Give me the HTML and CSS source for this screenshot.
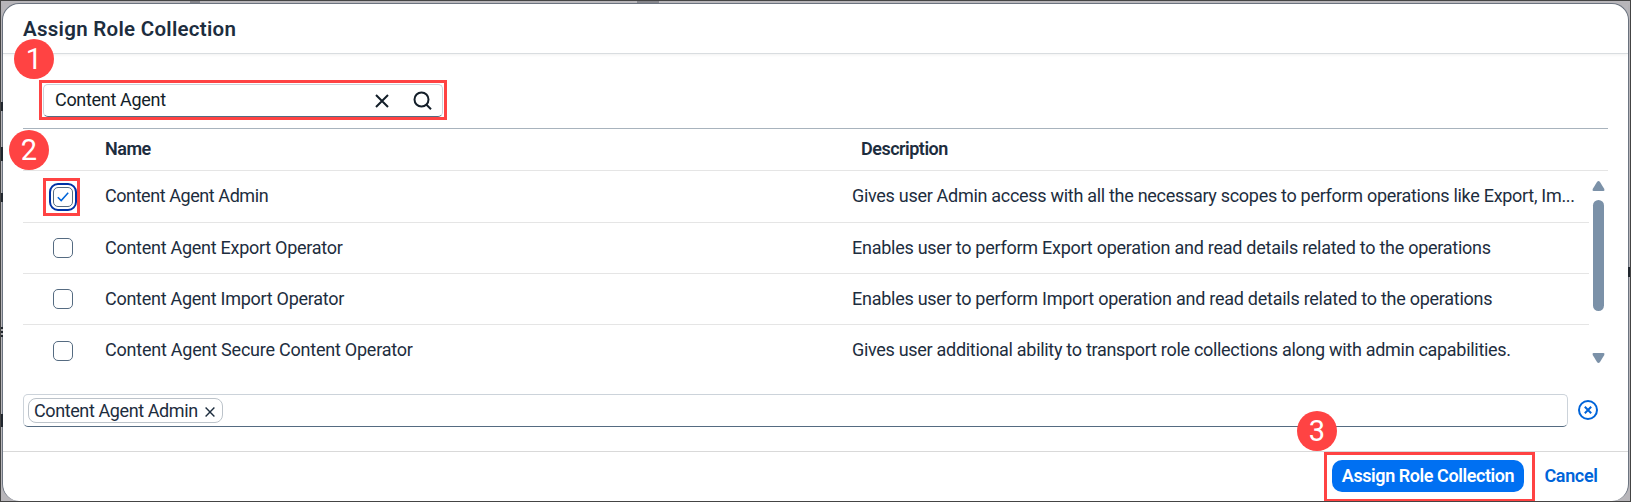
FILE: index.html
```html
<!DOCTYPE html>
<html lang="en">
<head>
<meta charset="utf-8">
<title>Assign Role Collection</title>
<link rel="stylesheet" href="styles.css">
</head>
<body>
<div class="frame">
  <span class="backdrop-tab tab-a"></span><span class="backdrop-tab tab-b"></span>
  <section class="dialog">
    <header class="dialog-header"><h1 class="title">Assign Role Collection</h1></header>
    <main class="content">
      <div class="search">
        <span class="search-text">Content Agent</span>
        <svg class="icon-clear" width="14" height="14" viewBox="0 0 14 14"><path d="M1 1l12 12M13 1L1 13"/></svg>
        <svg class="icon-search" width="20" height="20" viewBox="0 0 20 20"><circle cx="9.500" cy="8.500" r="7"/><path d="M14.500 13.800l4.500 4.500"/></svg>
      </div>
      <div class="table">
        <div class="row head"><b class="name">Name</b><b class="desc">Description</b></div>
        <div class="scroller">
          <div class="rows">
            <div class="row"><span class="check focused"><svg width="12" height="10" viewBox="0 0 12 10"><path d="M.8 5.200L4.200 8.600 11.200 .8"/></svg></span><span class="name n1">Content Agent Admin</span><span class="desc d1">Gives user Admin access with all the necessary scopes to perform operations like Export, Im...</span></div>
            <div class="row"><span class="check"></span><span class="name">Content Agent Export Operator</span><span class="desc">Enables user to perform Export operation and read details related to the operations</span></div>
            <div class="row"><span class="check"></span><span class="name">Content Agent Import Operator</span><span class="desc">Enables user to perform Import operation and read details related to the operations</span></div>
            <div class="row"><span class="check"></span><span class="name n4">Content Agent Secure Content Operator</span><span class="desc d4">Gives user additional ability to transport role collections along with admin capabilities.</span></div>
          </div>
          <div class="scrollbar">
            <svg width="13" height="10" viewBox="0 0 13 10"><path d="M6.500 0Q7.300 0 8 1L12.300 8Q13 10 11.500 10H1.500Q0 10 .7 8L5 1Q5.700 0 6.500 0z"/></svg>
            <span class="thumb"></span>
            <svg class="down" width="13" height="10" viewBox="0 0 13 10"><path d="M6.500 10Q7.300 10 8 9L12.300 2Q13 0 11.500 0H1.500Q0 0 .7 2L5 9Q5.700 10 6.500 10z"/></svg>
          </div>
        </div>
      </div>
      <div class="selection">
        <div class="token-input"><span class="token"><span class="token-text">Content Agent Admin</span><svg width="10" height="10" viewBox="0 0 10 10"><path d="M.6 .6l8.800 8.800M9.400 .6L.6 9.400"/></svg></span></div>
        <svg class="icon-remove" width="20" height="20" viewBox="0 0 20 20"><circle cx="10" cy="10" r="9"/><path d="M6.800 6.800l6.400 6.400M13.200 6.800l-6.400 6.400"/></svg>
      </div>
    </main>
    <footer class="dialog-footer">
      <button class="primary">Assign Role Collection</button>
      <button class="cancel">Cancel</button>
    </footer>
  </section>
  <span class="backdrop-mark mark-a"></span><span class="backdrop-mark mark-b"></span><span class="backdrop-mark mark-c"></span><span class="backdrop-mark mark-d"></span><span class="backdrop-mark mark-e"></span><span class="backdrop-mark mark-f"></span>
  <span class="mark-box box-1"></span><span class="mark-box box-2"></span><span class="mark-box box-3"></span>
  <span class="badge badge-1">1</span><span class="badge badge-2">2</span><span class="badge badge-3">3</span>
</div>
</body>
</html>
```
FILE: styles.css
```css
* { box-sizing: border-box; }
body { margin: 0; font-family: Roboto, "Liberation Sans", sans-serif; font-size: 18px; color: #1d2d3e; }
.frame { position: relative; width: 1631px; height: 502px; overflow: hidden; background: #b8b6ba; border: 1px solid #444; padding: 2px 1px 0 1px; }
.dialog { height: 498px; display: flex; flex-direction: column; background: #fff; border: 1px solid #6c7480; border-bottom: 0; border-radius: 17px; }
.frame span, .dialog button { white-space: nowrap; }
.dialog-header { height: 50px; flex: none; padding: 0 20px; border-bottom: 1px solid #d9dde0; box-shadow: 0 1px 3px #0000000f; display: flex; align-items: center; }
.title { margin: 0; font-size: 20.5px; line-height: 24px; font-weight: 600; letter-spacing: .28px; }
.content { flex: 1; min-height: 0; padding: 30px 20px 0; }
.search { width: 400px; height: 33px; margin-left: 20px; padding: 0 10px 0 11px; display: flex; align-items: center; border: 1px solid #ccd3da; border-bottom: 1px solid #556b81; border-radius: 5px; color: #131e29; }
.search-text { flex: 1; letter-spacing: -.32px; padding-bottom: 2px; }
svg { flex: none; fill: none; stroke: currentColor; stroke-width: 2; }
.icon-clear { margin-right: 23px; }
.table { margin-top: 11px; border-top: 1px solid #a8b3bd; }
.row { display: flex; align-items: center; height: 51px; border-bottom: 1px solid #e5e5e5; }
.row.head { height: 42px; padding-left: 82px; }
.row.head b { font-weight: 600; letter-spacing: -.5px; }
.name { width: 747px; flex: none; letter-spacing: -.27px; padding-bottom: 2px; }
.desc { letter-spacing: -.26px; padding-bottom: 2px; }
.n1 { letter-spacing: -.43px; }
.n4 { letter-spacing: -.23px; }
.d1 { letter-spacing: -.295px; }
.d4 { letter-spacing: -.3px; }
.row.head .desc { padding-left: 9px; }
.scroller { display: flex; height: 205px; }
.rows { width: 1566px; }
.rows .row:first-child { height: 52px; }
.rows .row:last-child { border-bottom: 0; }
.check { width: 20px; height: 20px; margin: 0 32px 0 30px; flex: none; display: flex; align-items: center; justify-content: center; border: 1px solid #556b81; border-radius: 5px; color: #0064d9; }
.check svg { stroke-width: 1.5; }
.focused { outline: 2px solid #0032a5; outline-offset: 2px; }
.scrollbar { width: 19px; padding: 10px 0 13px 3px; display: flex; flex-direction: column; color: #7b91a8; }
.scrollbar svg { fill: currentColor; stroke: none; }
.thumb { width: 11px; height: 111px; margin: 9px 0 0 1px; border-radius: 6px; background: #7b91a8; }
.down { margin-top: auto; }
.selection { display: flex; align-items: center; margin-top: 18px; }
.token-input { width: 1545px; height: 33px; padding: 3px 4px; border: 1px solid #ccd3da; border-bottom: 1px solid #556b81; border-radius: 5px; }
.token { display: flex; align-items: center; width: 195px; height: 25px; padding: 0 7px 0 5px; justify-content: space-between; border: 1px solid #bcc3ca; border-radius: 8px; }
.token-text { letter-spacing: -.4px; }
.token svg { stroke-width: 1.4; margin-top: 3px; }
.icon-remove { margin: 0 0 2px 10px; color: #0064d9; }
.dialog-footer { height: 50px; flex: none; border-top: 1px solid #d9d9d9; display: flex; align-items: flex-start; justify-content: flex-end; padding: 8px 30px 0; }
button { height: 32px; padding: 0; border: 0; background: none; color: #0064d9; font: 600 18px/32px Roboto, "Liberation Sans", sans-serif; }
.primary { width: 192px; margin-right: 20px; border-radius: 10px; background: #0070f2; color: #fff; letter-spacing: -.43px; }
.cancel { width: 54px; letter-spacing: -.35px; }
.badge { position: absolute; width: 40px; height: 40px; border-radius: 50%; background: #ff4343; color: #fff; font: 29px/41px Roboto, "Liberation Sans", sans-serif; text-align: center; }
.badge-1 { left: 13px; top: 38px; }
.badge-2 { left: 8px; top: 129px; }
.badge-3 { left: 1296px; top: 410px; }
.mark-box { position: absolute; border: 3px solid #ff4343; }
.box-1 { left: 38px; top: 79px; width: 408px; height: 40px; }
.box-2 { left: 42px; top: 177px; width: 37px; height: 38px; }
.box-3 { left: 1323px; top: 451px; width: 211px; height: 50px; }
.backdrop-tab { position: absolute; top: 0; height: 2px; background: #85858b; }
.tab-a { left: 189px; width: 10px; }
.tab-b { left: 636px; width: 22px; }
.backdrop-mark { position: absolute; left: 0; width: 2px; background: #20262e; }
.mark-a { top: 101px; height: 9px; }
.mark-b { top: 146px; height: 14px; }
.mark-c { top: 192px; height: 9px; }
.mark-d { top: 413px; height: 13px; }
.mark-e { left: 1627px; top: 266px; height: 10px; }
.mark-f { top: 326px; height: 10px; background: repeating-linear-gradient(#20262e 0 2px, #aaaaae 2px 4px); }
```
